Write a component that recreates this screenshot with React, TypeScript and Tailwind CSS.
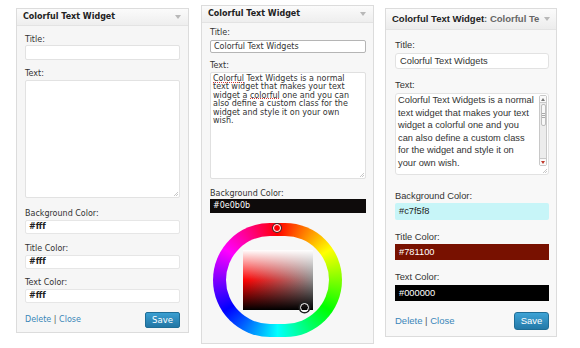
const Arrow = () => (
  <svg width="6" height="4" viewBox="0 0 6 4" className="shrink-0">
    <path d="M0 0h6L3 4z" fill="#b8b8b8" />
  </svg>
);

const Grip = () => (
  <svg width="5" height="5" viewBox="0 0 5 5" className="absolute right-[1px] bottom-[1px]">
    <path d="M5 1L1 5M5 3L3 5" stroke="#b0b0b0" strokeWidth="0.7" />
  </svg>
);

// spell-check squiggle under a word
const Typo = ({ children }: { children: string }) => (
  <span className="bg-[linear-gradient(to_right,#d83a3a_50%,transparent_50%)] bg-[length:2px_1px] bg-repeat-x bg-[position:0_7.5px]">{children}</span>
);

const PANEL3_LINES = [
  "Colorful Text Widgets is a normal",
  "text widget that makes your text",
  "widget a colorful one and you",
  "can also define a custom class",
  "for the widget and style it on",
  "your own wish.",
];

const SaveButton = ({ big }: { big?: boolean }) => (
  <button
    className={
      big
        ? "w-[35px] h-[18px] rounded-[3px] border border-[#1f6d96] bg-linear-to-b from-[#3da3d6] to-[#2479a8] text-white text-[9.5px] leading-[16px]"
        : "w-[35px] h-[16px] rounded-[2px] border border-[#1f6d96] bg-linear-to-b from-[#3a9fd2] to-[#2376a4] text-white text-[8.5px] leading-[14px]"
    }
  >
    Save
  </button>
);

const ColorWheel = () => (
  <div className="relative ml-[3px] mt-[10px] w-[129px] h-[114px] rounded-full bg-[conic-gradient(#f00,#ff0,#0f0,#0ff,#00f,#f0f,#f00)] flex items-center justify-center">
    <div className="w-[103px] h-[88px] rounded-full bg-[#f7f7f7] flex items-center justify-center">
      <div className="w-[70px] h-[60px] bg-[linear-gradient(to_bottom,#fff,rgba(255,255,255,0)_50%,rgba(0,0,0,0)_50%,#000),linear-gradient(to_right,#f00,#8a8a8a)]" />
    </div>
    <span className="absolute left-[60px] top-[1px] w-[8px] h-[8px] rounded-full border-[1.5px] border-white ring-1 ring-[#333]" />
    <span className="absolute left-[87px] top-[80px] w-[9px] h-[9px] rounded-full border-[1.5px] border-white ring-[1.5px] ring-[#222]" />
  </div>
);

const App = () => {
  return (
    <div className="w-[580px] h-[348px] bg-white flex items-start pl-[16px] overflow-hidden">
      {/* panel 1: empty widget */}
      <div className="mt-[8px] w-[173px] h-[325px] border border-[#dcdcdc] bg-[#f6f6f6] font-['DejaVu_Sans',sans-serif] text-[8px] text-[#333] flex flex-col">
        <div className="h-[17px] shrink-0 flex items-center justify-between pl-[6px] pr-[7px] border-b border-[#e3e3e3] bg-linear-to-b from-[#fbfbfb] to-[#eeeeee]">
          <span className="font-bold text-[#222]">Colorful Text Widget</span>
          <Arrow />
        </div>
        <div className="flex flex-col px-[8px] pt-[9px]">
          <p className="leading-[10px]">Title:</p>
          <div className="h-[15px] bg-white border border-[#e2e2e2] rounded-[2px]" />
          <p className="mt-[9px] leading-[10px]">Text:</p>
          <div className="relative mt-[1px] h-[118px] bg-white border border-[#e2e2e2] rounded-[2px]">
            <Grip />
          </div>
          <p className="mt-[11px] leading-[10px]">Background Color:</p>
          <div className="mt-[1px] h-[14px] bg-white border border-[#e6e6e6] rounded-[2px] pl-[3px] leading-[12px] font-semibold text-[#222]">#fff</div>
          <p className="mt-[10px] leading-[10px]">Title Color:</p>
          <div className="mt-[1px] h-[14px] bg-white border border-[#e6e6e6] rounded-[2px] pl-[3px] leading-[12px] font-semibold text-[#222]">#fff</div>
          <p className="mt-[9px] leading-[10px]">Text Color:</p>
          <div className="mt-[1px] h-[14px] bg-white border border-[#e6e6e6] rounded-[2px] pl-[3px] leading-[12px] font-semibold text-[#222]">#fff</div>
          <div className="mt-[9px] flex items-center justify-between">
            <span className="text-[#3a86b8]">
              Delete <span className="text-[#555]">|</span> Close
            </span>
            <SaveButton />
          </div>
        </div>
      </div>

      {/* panel 2: color picker open */}
      <div className="ml-[12px] mt-[5px] w-[173px] h-[339px] border border-[#dcdcdc] bg-[#f7f7f7] font-['DejaVu_Sans',sans-serif] text-[8px] text-[#333] flex flex-col">
        <div className="h-[17px] shrink-0 flex items-center justify-between pl-[6px] pr-[7px] border-b border-[#e3e3e3] bg-linear-to-b from-[#fbfbfb] to-[#eeeeee]">
          <span className="font-bold text-[#222]">Colorful Text Widget</span>
          <Arrow />
        </div>
        <div className="flex flex-col pl-[8px] pr-[7px] pt-[5px]">
          <p className="leading-[10px]">Title:</p>
          <div className="mt-[2px] h-[13px] bg-white border border-[#b5b5b5] rounded-[2px] pl-[3px] leading-[11px] text-[#333]">Colorful Text Widgets</div>
          <p className="mt-[8px] leading-[10px]">Text:</p>
          <div className="relative mt-[1px] h-[107px] bg-white border border-[#e0e0e0] rounded-[2px] pl-[2px] pt-[2px] leading-[8.4px] text-[#333]">
            <p><Typo>Colorful</Typo> Text Widgets is a normal</p>
            <p>text widget that makes your text</p>
            <p>widget a <Typo>colorful</Typo> one and you can</p>
            <p>also define a custom class for the</p>
            <p>widget and style it on your own</p>
            <p>wish.</p>
            <Grip />
          </div>
          <p className="mt-[10px] leading-[10px]">Background Color:</p>
          <div className="h-[14px] bg-[#0e0b0b] pl-[3px] leading-[14px] text-white">#0e0b0b</div>
          <ColorWheel />
        </div>
      </div>

      {/* panel 3: filled widget */}
      <div className="ml-[11px] mt-[8px] w-[172px] h-[329px] border border-[#dcdcdc] bg-[#f8f8f8] font-['Liberation_Sans',sans-serif] text-[9.3px] text-[#333] flex flex-col">
        <div className="h-[21px] shrink-0 flex items-center justify-between pl-[6px] pr-[6px] border-b border-[#e3e3e3] bg-linear-to-b from-[#fbfbfb] to-[#ececec]">
          <span className="font-bold whitespace-nowrap text-[9.5px]">
            <span className="text-[#222]">Colorful Text Widget</span>
            <span className="text-[#666]">: Colorful Te</span>
          </span>
          <Arrow />
        </div>
        <div className="flex flex-col pl-[9px] pr-[7px] pt-[9px]">
          <p className="leading-[12px]">Title:</p>
          <div className="mt-[2px] h-[16px] bg-white border border-[#e2e2e2] rounded-[3px] pl-[4px] leading-[14px]">Colorful Text Widgets</div>
          <p className="mt-[10px] leading-[12px]">Text:</p>
          <div className="relative mt-[2px] h-[82px] bg-white border border-[#e2e2e2] rounded-[3px] flex">
            <div className="flex-1 pl-[2px] leading-[12.6px]">
              {PANEL3_LINES.map((line) => (
                <p key={line}>{line}</p>
              ))}
            </div>
            <div className="mt-[1px] mr-[1px] w-[8px] h-[71px] flex flex-col border border-[#c8c8c8] rounded-[2px] bg-[#ececec]">
              <div className="h-[7px] flex items-center justify-center border-b border-[#c8c8c8] bg-[#fafafa]">
                <svg width="4" height="3" viewBox="0 0 4 3"><path d="M0 3L2 0L4 3z" fill="#777" /></svg>
              </div>
              <div className="mx-[0.5px] mt-[1px] h-[22px] rounded-[2px] border border-[#bdbdbd] bg-[#f8f8f8] flex flex-col items-center justify-center gap-[1px]">
                <span className="w-[3px] h-px bg-[#aaa]" />
                <span className="w-[3px] h-px bg-[#aaa]" />
                <span className="w-[3px] h-px bg-[#aaa]" />
              </div>
              <div className="flex-1" />
              <div className="h-[7px] flex items-center justify-center border-t border-[#c8c8c8] bg-[#fafafa]">
                <svg width="4" height="3" viewBox="0 0 4 3"><path d="M0 0L2 3L4 0z" fill="#c0392b" /></svg>
              </div>
            </div>
            <Grip />
          </div>
          <p className="mt-[15px] leading-[12px]">Background Color:</p>
          <div className="mt-[1px] h-[17px] bg-[#c7f5f8] rounded-[2px] pl-[4px] leading-[17px] text-[#222]">#c7f5f8</div>
          <p className="mt-[11px] leading-[12px]">Title Color:</p>
          <div className="mt-[1px] h-[16px] bg-[#781100] pl-[4px] leading-[16px] text-white">#781100</div>
          <p className="mt-[11px] leading-[12px]">Text Color:</p>
          <div className="mt-[2px] h-[16px] bg-black pl-[4px] leading-[16px] text-white">#000000</div>
          <div className="mt-[11px] flex items-center justify-between">
            <span className="text-[#3a86b8] text-[9.5px]">
              Delete <span className="text-[#555]">|</span> Close
            </span>
            <SaveButton big />
          </div>
        </div>
      </div>
    </div>
  );
};

export default App;
